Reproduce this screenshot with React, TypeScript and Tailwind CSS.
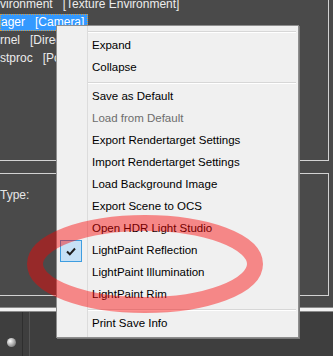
import React from "react";

type Item =
  | { kind: "sep" }
  | { kind: "item"; label: string; disabled?: boolean; checked?: boolean };

const items: Item[] = [
  { kind: "sep" },
  { kind: "item", label: "Expand" },
  { kind: "item", label: "Collapse" },
  { kind: "sep" },
  { kind: "item", label: "Save as Default" },
  { kind: "item", label: "Load from Default", disabled: true },
  { kind: "item", label: "Export Rendertarget Settings" },
  { kind: "item", label: "Import Rendertarget Settings" },
  { kind: "item", label: "Load Background Image" },
  { kind: "item", label: "Export Scene to OCS" },
  { kind: "item", label: "Open HDR Light Studio" },
  { kind: "item", label: "LightPaint Reflection", checked: true },
  { kind: "item", label: "LightPaint Illumination" },
  { kind: "item", label: "LightPaint Rim" },
  { kind: "sep" },
  { kind: "item", label: "Print Save Info" },
];

const treeRows = [
  { name: "vironment", type: "[Texture Environment]" },
  { name: "ager", type: "[Camera]", selected: true },
  { name: "rnel", type: "[Direc" },
  { name: "stproc", type: "[Po" },
];

function Gutter({ children, h }: { children?: React.ReactNode; h: string }) {
  return (
    <div className={`flex ${h} w-[31px] shrink-0 items-center pl-[3px] border-r border-[#dcdcdc]`}>
      {children}
    </div>
  );
}

function MenuRow({ item }: { item: Item }) {
  if (item.kind === "sep") {
    return (
      <div className="flex h-[7px]">
        <Gutter h="h-[7px]" />
        <div className="flex-1 pt-[3px] pr-[2px]">
          <div className="h-px bg-[#d7d7d7]" />
          <div className="h-px bg-white" />
        </div>
      </div>
    );
  }
  return (
    <div className="flex h-[22px]">
      <Gutter h="h-[22px]">
        {item.checked && (
          <div className="flex h-[22px] w-[22px] items-center justify-center border border-[#3e9de0] bg-[#c6e1f6]">
            <svg width="10" height="9" viewBox="0 0 10 9">
              <path d="M1 4.5 L3.8 7.3 L9 1.5" fill="none" stroke="#1e1e1e" strokeWidth="2" />
            </svg>
          </div>
        )}
      </Gutter>
      <div
        className={`flex flex-1 items-center pl-[4px] ${item.disabled ? "text-[#6d6d6d]" : "text-black"}`}
      >
        {item.label}
      </div>
    </div>
  );
}

export default function App() {
  return (
    <div className="relative h-[356px] w-[333px] overflow-hidden bg-[#4a4a4a] font-['Liberation_Sans',Arial,sans-serif]">
      {/* tree panel */}
      <div className="h-[161px] w-[329px] overflow-hidden border-r border-b border-[#d2d2d2] text-[12px] text-[#ececec]">
        <div className="-mt-[5px]">
          {treeRows.map((r) => (
            <div key={r.name} className="flex h-[18px] items-center">
              {r.selected ? (
                <div className="flex h-[17px] items-center gap-[10px] border border-dotted border-[#d99a3a] bg-[#3399ff] pr-[3px] text-white">
                  <span>{r.name}</span>
                  <span>{r.type}</span>
                </div>
              ) : (
                <div className="flex items-center gap-[10px]">
                  <span>{r.name}</span>
                  <span className="whitespace-nowrap">{r.type}</span>
                </div>
              )}
            </div>
          ))}
        </div>
      </div>

      {/* properties panel */}
      <div className="mt-[12px] h-[123px] w-[329px] border-t border-r border-b border-[#d2d2d2] text-[12px] text-[#e6e6e6]">
        <div className="mt-[13px] h-[16px] leading-[16px]">Type:</div>
      </div>

      {/* splitter band */}
      <div className="mt-[11px] h-[5px] border-t border-b border-[#8a8a8a] bg-[#f2f2f2]" />

      {/* bottom toolbar */}
      <div className="flex h-[44px] bg-[#3e3e3e]">
        <div className="flex w-[23px] items-end justify-center border-r border-[#2e2e2e] pb-[9px]">
          <div className="h-[9px] w-[9px] rounded-full bg-[radial-gradient(circle_at_35%_35%,#ffffff,#9a9a9a_60%,#555555)]" />
        </div>
        <div className="w-[7px] border-r border-[#555555]" />
      </div>

      {/* context menu */}
      <div className="absolute left-[56px] top-[25px] w-[243px] border border-[#8e8e8e] bg-[#f0f0f0] text-[11.5px] shadow-[1px_1px_0_#7a7a7a]">
        <div className="flex h-[2px]">
          <Gutter h="h-[2px]" />
        </div>
        {items.map((it, i) => (
          <MenuRow key={i} item={it} />
        ))}
        <div className="flex h-[2px]">
          <Gutter h="h-[2px]" />
        </div>
      </div>

      {/* red annotation ellipse */}
      <svg className="pointer-events-none absolute inset-0" width="333" height="356">
        <ellipse
          cx="145"
          cy="264"
          rx="110"
          ry="41"
          fill="none"
          stroke="rgba(250,0,0,0.44)"
          strokeWidth="16"
        />
      </svg>
    </div>
  );
}
